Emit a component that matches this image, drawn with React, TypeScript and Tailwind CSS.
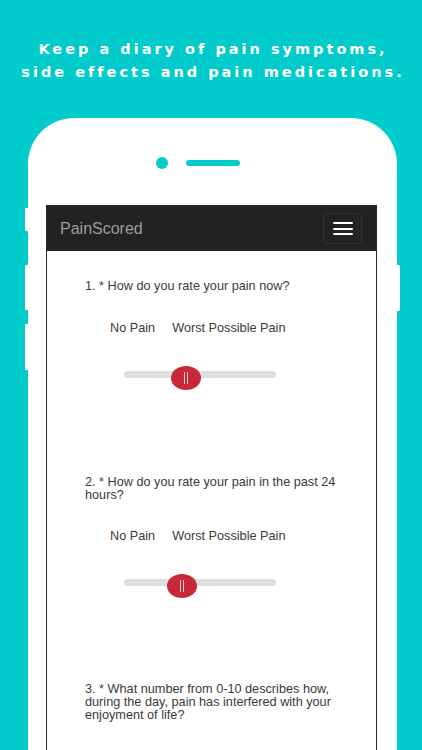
import React from "react";

function Slider({ pos }: { pos: number }) {
  return (
    <div className="relative ml-[39px] h-[24px] w-[152px]">
      <div className="absolute left-0 right-0 top-[5px] h-[7px] rounded-full bg-[#dddddd]" />
      <div
        className="absolute top-0 flex h-[24px] w-[30px] items-center justify-center gap-[2px] rounded-[50%] bg-[#c9283b]"
        style={{ left: pos - 15 }}
      >
        <div className="h-[12px] w-[1px] bg-[#f3c9cd]" />
        <div className="h-[12px] w-[1px] bg-[#f3c9cd]" />
      </div>
    </div>
  );
}

function Labels() {
  return (
    <div className="ml-[25px] flex gap-[17px] text-[12.7px] leading-[13px] text-[#3a3a3a]">
      <span>No Pain</span>
      <span>Worst Possible Pain</span>
    </div>
  );
}

export default function App() {
  return (
    <div
      className="relative h-[750px] w-[422px] overflow-hidden bg-[#02cbcb]"
      style={{ fontFamily: "'Liberation Sans', Arial, sans-serif" }}
    >
      <div
        className="pl-[4px] pt-[38px] text-center text-[14.5px] font-bold leading-[23px] tracking-[3px] text-white"
        style={{ fontFamily: "'DejaVu Sans', Verdana, sans-serif" }}
      >
        <div>Keep a diary of pain symptoms,</div>
        <div>side effects and pain medications.</div>
      </div>

      <div className="relative ml-[28px] mr-[25px] mt-[34px] h-[640px] rounded-t-[46px] bg-white">
        {/* side buttons */}
        <div className="absolute left-[-3px] top-[90px] h-[23px] w-[3px] rounded-l-[1px] bg-white" />
        <div className="absolute left-[-3px] top-[147px] h-[45px] w-[3px] rounded-l-[1px] bg-white" />
        <div className="absolute left-[-3px] top-[206px] h-[46px] w-[3px] rounded-l-[1px] bg-white" />
        <div className="absolute right-[-3px] top-[147px] h-[46px] w-[3px] rounded-r-[1px] bg-white" />

        {/* camera + speaker */}
        <div className="flex items-center pl-[128px] pt-[39px]">
          <div className="h-[12px] w-[12px] rounded-full bg-[#02cbcb]" />
          <div className="ml-[18px] h-[6px] w-[54px] rounded-full bg-[#02cbcb]" />
        </div>

        {/* screen */}
        <div className="ml-[18px] mr-[20px] mt-[36px] h-[560px] border border-[#2b2b33] bg-white">
          <div className="flex h-[45px] items-center justify-between bg-[#222222] pl-[13px] pr-[14px]">
            <span className="text-[16px] text-[#9d9d9d]">PainScored</span>
            <div className="flex h-[31px] w-[39px] flex-col items-center justify-center gap-[3.6px] rounded-[4px] border border-[#333333]">
              <div className="h-[2px] w-[20px] rounded-[1px] bg-white" />
              <div className="h-[2px] w-[20px] rounded-[1px] bg-white" />
              <div className="h-[2px] w-[20px] rounded-[1px] bg-white" />
            </div>
          </div>

          <div className="pl-[38px] pr-[30px] pt-[29px] text-[12.7px] leading-[13px] text-[#3a3a3a]">
            <div>1. * How do you rate your pain now?</div>
            <div className="mt-[29px]">
              <Labels />
            </div>
            <div className="mt-[31px]">
              <Slider pos={62} />
            </div>

            <div className="mt-[86px]">2. * How do you rate your pain in the past 24 hours?</div>
            <div className="mt-[28px]">
              <Labels />
            </div>
            <div className="mt-[31px]">
              <Slider pos={58} />
            </div>

            <div className="mt-[85px]">
              3. * What number from 0-10 describes how, during the day, pain has interfered with your enjoyment of life?
            </div>
          </div>
        </div>
      </div>
    </div>
  );
}
